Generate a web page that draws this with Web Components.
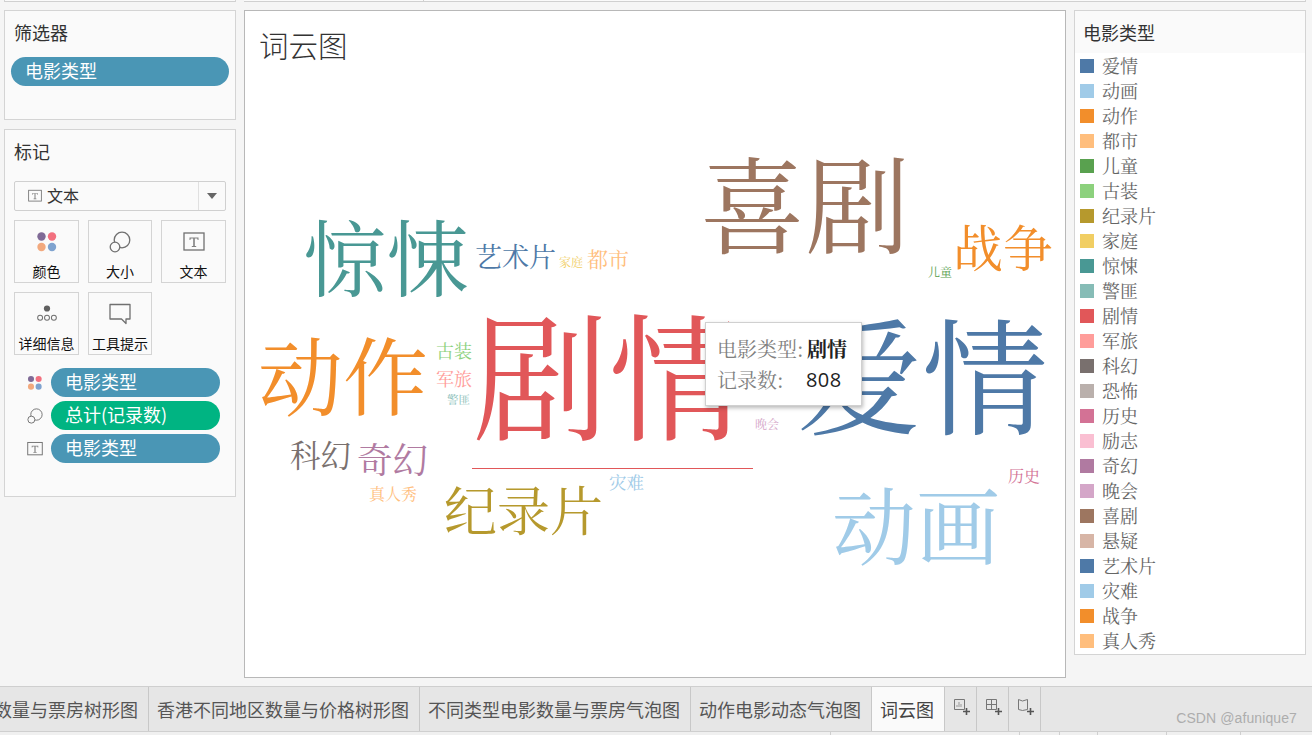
<!DOCTYPE html>
<html lang="zh"><head><meta charset="utf-8"><title>词云图</title>
<style>
html,body{margin:0;padding:0;width:1312px;height:735px;overflow:hidden;background:#f5f5f5;font-family:"Noto Sans CJK SC",sans-serif}
</style></head><body>
<app-shell></app-shell>
<script>
const SERIF='"Noto Serif CJK SC","Source Han Serif SC","Liberation Serif","Noto Sans CJK SC",serif';
const SANS='"Noto Sans CJK SC",sans-serif';
const ICONS={
 color:s=>`<svg width="${s}" height="${s}" viewBox="0 0 22 22"><circle cx="5.5" cy="5.5" r="4.2" fill="#7f6a96"/><circle cx="16" cy="5.5" r="4.2" fill="#f2707f"/><circle cx="5.5" cy="16" r="4.2" fill="#f2a97e"/><circle cx="16" cy="16" r="4.2" fill="#7fa3cf"/></svg>`,
 size:s=>`<svg width="${s}" height="${s}" viewBox="0 0 22 22" fill="none" stroke="#707070" stroke-width="1.3"><circle cx="13" cy="9" r="7.8"/><circle cx="6" cy="16" r="4.8" fill="#fafafa"/></svg>`,
 text:s=>`<svg width="${s}" height="${s}" viewBox="0 0 22 22"><rect x="1" y="2" width="20" height="17" fill="none" stroke="#707070" stroke-width="1.3"/><path d="M6.5 6.5h9v2.5h-.8l-.5-1.5h-2.4v7.5h1.4v1H8.800v-1h1.400V7.500H7.800L7.300 9H6.500z" fill="#808080"/></svg>`,
 detail:s=>`<svg width="${s}" height="${s}" viewBox="0 0 24 22"><circle cx="12" cy="5" r="3.4" fill="#606060"/><g fill="none" stroke="#707070" stroke-width="1.1"><circle cx="4.500" cy="15" r="2.700"/><circle cx="12" cy="15" r="2.700"/><circle cx="19.500" cy="15" r="2.700"/></g></svg>`,
 tip:s=>`<svg width="${s}" height="${s}" viewBox="0 0 22 22" fill="none" stroke="#707070" stroke-width="1.3"><path d="M1 1.500h20v14.500h-4v4.500l-4.500-4.500H1z" stroke-linejoin="round"/></svg>`
};
function def(name,css,html,init){customElements.define(name,class extends HTMLElement{connectedCallback(){if(this.shadowRoot)return;const r=this.attachShadow({mode:'open'});r.innerHTML=`<style>${css}</style>`+(typeof html==='function'?html(this):html);if(init)init(this,r)}})}

def('x-panel',`:host{display:block;box-sizing:border-box;background:#fafafa;border:1px solid #d4d4d4;padding:8px 9px 0}
h2{margin:0;font:400 18px/26px ${SANS};color:#333}`,e=>`<h2>${e.getAttribute('title-text')}</h2><slot></slot>`);

def('x-pill',`:host{display:flex;align-items:center;box-sizing:border-box;height:29px;border-radius:15px;background:var(--c,#4a96b5);color:#fff;font:400 18px/29px ${SANS};padding-left:15px;white-space:nowrap}
span{position:relative;left:-1px;top:-1px}`,`<span><slot></slot></span>`);

def('x-dropdown',`:host{display:flex;align-items:center;box-sizing:border-box;height:30px;margin-top:17px;border:1px solid #d0d0d0;border-radius:2px;background:#fafafa;font:400 16px/26px ${SANS};color:#333}
.a{display:flex;align-items:center;gap:5px;flex:1;padding-left:13px}
.b{width:26px;height:100%;border-left:1px solid #e0e0e0;display:flex;align-items:center;justify-content:center}
i{width:0;height:0;border-left:5px solid transparent;border-right:5px solid transparent;border-top:6px solid #666;margin-bottom:1px}`,
e=>`<div class="a">${ICONS.text(14)}<span style="margin-top:-3px"><slot></slot></span></div><div class="b"><i></i></div>`);

def('x-card',`:host{display:flex;flex-direction:column;align-items:center;box-sizing:border-box;height:63px;border:1px solid #d4d4d4;background:#fafafa}
.i{height:36px;display:flex;align-items:center;justify-content:center;margin-top:3px}
.l{font:400 14px/20px ${SANS};color:#111;white-space:nowrap;margin-top:1px}`,
e=>`<div class="i">${ICONS[e.getAttribute('icon')](22)}</div><div class="l"><slot></slot></div>`);

def('x-shelf-row',`:host{display:flex;align-items:center;gap:9px;padding-left:14px}.i{width:14px;height:14px;display:flex;align-items:center;justify-content:center}.i svg{flex:none}::slotted(*){flex:1}`,
e=>`<div class="i">${ICONS[e.getAttribute('icon')](16)}</div><slot></slot>`);

def('x-tooltip',`:host{position:absolute;left:460px;top:311px;box-sizing:border-box;width:157px;height:84px;background:#fff;border:1px solid #d0d0d0;box-shadow:1px 2px 4px rgba(0,0,0,.28);padding:10px 0 0 11px;display:grid;grid-template-columns:90px auto;grid-auto-rows:31px;align-items:center}
.k{font:400 20px/31px ${SERIF};color:#808080;white-space:nowrap}
.v{font:700 20px/31px ${SERIF};color:#222;white-space:nowrap}
.n{font:400 20px/31px "Open Sans","Lato",sans-serif;color:#222;letter-spacing:.4px;margin-left:-1px}`,
`<span class="k">电影类型:</span><span class="v">剧情</span><span class="k">记录数:</span><span class="n">808</span>`);

def('x-word',`:host{position:absolute;white-space:nowrap;line-height:1;font-family:${SERIF}}`,`<slot></slot>`,
e=>{const s=e.style,a=k=>e.getAttribute(k);s.left=(a('x')-245)+'px';s.top=(a('y')-11)+'px';s.fontSize=a('s')+'px';s.color=a('c')});

const WORDS=[['剧情',472,302,137,'#e15759'],['爱情',796,308,126,'#4e79a7'],['喜剧',700,147,105,'#9d7660'],['动画',832,480,84,'#a0cbe8'],['惊悚',303,213,83,'#499894'],['动作',258,330,85,'#f28e2b'],['战争',953,220,50,'#f28e2b'],['纪录片',444,482,53,'#b6992d'],['艺术片',475,242,27,'#4e79a7'],['科幻',290,439,30.500,'#79706e'],['奇幻',357,440,35.500,'#b07aa1'],['都市',587,248,21,'#ffbe7d'],['家庭',559,256,12,'#f1ce63'],['儿童',928,266,12,'#59a14f'],['古装',436,341,18,'#8cd17d'],['军旅',436,369,18,'#ff9d9a'],['警匪',447,394,11.500,'#86bcb6'],['晚会',755,418,12,'#d4a6c8'],['灾难',609,473,17.500,'#a0cbe8'],['历史',1008,468,16,'#d37295'],['真人秀',369,486,16,'#ffbe7d']];
def('x-canvas',`:host{display:block;position:relative;box-sizing:border-box;width:822px;height:668px;background:#fff;border:1px solid #b8b8b8;overflow:hidden}
h1{margin:0;padding:13px 0 0 14px;font:300 29.5px/40px ${SANS};color:#333}
.rule{position:absolute;left:227px;top:457px;width:281px;height:1px;background:#e15759}`,
`<h1>词云图</h1>`+WORDS.map(w=>`<x-word x="${w[1]}" y="${w[2]}" s="${w[3]}" c="${w[4]}">${w[0]}</x-word>`).join('')+`<div class="rule"></div><x-tooltip></x-tooltip>`);

const LEG=[['爱情','#4e79a7'],['动画','#a0cbe8'],['动作','#f28e2b'],['都市','#ffbe7d'],['儿童','#59a14f'],['古装','#8cd17d'],['纪录片','#b6992d'],['家庭','#f1ce63'],['惊悚','#499894'],['警匪','#86bcb6'],['剧情','#e15759'],['军旅','#ff9d9a'],['科幻','#79706e'],['恐怖','#bab0ac'],['历史','#d37295'],['励志','#fabfd2'],['奇幻','#b07aa1'],['晚会','#d4a6c8'],['喜剧','#9d7660'],['悬疑','#d7b5a6'],['艺术片','#4e79a7'],['灾难','#a0cbe8'],['战争','#f28e2b'],['真人秀','#ffbe7d']];
def('x-legend-item',`:host{display:flex;align-items:center;height:25px;padding-left:5px;gap:8px;font:400 18px/25px ${SERIF};color:#666}
i{width:14px;height:14px;background:var(--s)}`,`<i></i><span><slot></slot></span>`);
def('x-legend',`:host{display:block;box-sizing:border-box;height:645px;background:#fff;border:1px solid #d4d4d4}
h3{margin:0;height:42px;padding-left:8px;background:#fafafa;font:400 18px/42px ${SANS};color:#333}`,
`<h3>电影类型</h3>`+LEG.map(l=>`<x-legend-item style="--s:${l[1]}">${l[0]}</x-legend-item>`).join(''));

const PLUS=`<path d="M9 12.500h7M12.500 9v7" stroke="#555" stroke-width="1.6" fill="none"/>`;
const ADD={a:`<svg width="16" height="17" viewBox="0 0 16 17" fill="none" stroke="#777"><path d="M.5.500h10v10H.5z"/><path d="M3 8V6M5 8V3M7 8V5" stroke="#999"/>${PLUS}</svg>`,
b:`<svg width="16" height="17" viewBox="0 0 16 17" fill="none" stroke="#777"><path d="M.5.500h10v10H.5zM.5 5.500h10M5.500.500v10"/>${PLUS}</svg>`,
c:`<svg width="16" height="17" viewBox="0 0 16 17" fill="none" stroke="#777"><path d="M.5.500l4 1.500 5-1.500v10l-5 1-4-1z"/>${PLUS}</svg>`};
def('x-tab',`:host{display:flex;align-items:center;box-sizing:border-box;height:100%;padding:0 10px 0 8px;border-right:1px solid #c8c8c8;font:400 18px/44px ${SANS};color:#555;white-space:nowrap;overflow:hidden;flex:none}
:host([active]){background:#fafafa;color:#444}
:host([clip]){width:149px;justify-content:flex-end;padding:0}
:host([clip]) span{padding-right:10px}
:host([add]){width:32px;padding:0 0 4px 9px}
svg{display:block}`,e=>e.hasAttribute('add')?ADD[e.getAttribute('add')]:`<span><slot></slot></span>`);
def('x-tabbar',`:host{display:flex;position:relative;box-sizing:border-box;height:46px;border-top:1px solid #cfcfcf;border-bottom:1px solid #cfcfcf;background:#e6e6e6}
.w{position:absolute;right:15px;top:22px;font:400 14px/18px "Liberation Sans",sans-serif;color:#adadad;letter-spacing:.1px}`,
`<slot></slot><span class="w">CSDN @afunique7</span>`);
def('x-statusbar',`:host{display:flex;flex:1;background:#f0f0f0}
i{box-sizing:border-box;height:100%;border-right:1px solid #cfcfcf}`,
[831,189,40,38,69,74].map(w=>`<i style="width:${w}px;flex:none"></i>`).join(''));

def('app-shell',`:host{display:flex;flex-direction:column;width:1312px;height:735px}
.top{height:2px;display:flex;gap:8px;box-sizing:border-box;padding-left:4px;flex:none}
.top i{display:block;box-sizing:border-box;height:2px;border-bottom:1px solid #d0d0d0;background:#fafafa}
.top i.l{width:232px;border-left:1px solid #d4d4d4;border-right:1px solid #d4d4d4}
.top i.c{width:180px;border-right:1px solid #d0d0d0;margin-right:-8px}
.top i.r{width:882px;border-right:1px solid #d4d4d4}
.main{flex:none;height:684px;box-sizing:border-box;padding:8px 6px 0 4px;display:flex;gap:8px;align-items:flex-start}
.left{width:232px;flex:none;display:flex;flex-direction:column;gap:9px}
.right{width:232px;flex:none}
.filter{height:110px}
.filter x-pill{margin:12px 0 0 -3px;width:218px}
.marks{height:368px}
.grid{display:grid;grid-template-columns:65px 64px 65px;gap:9px;margin-top:9px}
.shelf{display:flex;flex-direction:column;gap:4px;margin-top:13px;padding-right:6px}`,
`<div class="top"><i class="l"></i><i class="c"></i><i class="r"></i></div>
<div class="main">
 <div class="left">
  <x-panel class="filter" title-text="筛选器"><x-pill>电影类型</x-pill></x-panel>
  <x-panel class="marks" title-text="标记">
   <x-dropdown>文本</x-dropdown>
   <div class="grid">
    <x-card icon="color">颜色</x-card><x-card icon="size">大小</x-card><x-card icon="text">文本</x-card>
    <x-card icon="detail">详细信息</x-card><x-card icon="tip">工具提示</x-card>
   </div>
   <div class="shelf">
    <x-shelf-row icon="color"><x-pill>电影类型</x-pill></x-shelf-row>
    <x-shelf-row icon="size"><x-pill style="--c:#00b482">总计(记录数)</x-pill></x-shelf-row>
    <x-shelf-row icon="text"><x-pill>电影类型</x-pill></x-shelf-row>
   </div>
  </x-panel>
 </div>
 <x-canvas></x-canvas>
 <div class="right"><x-legend></x-legend></div>
</div>
<x-tabbar>
 <x-tab clip>电影数量与票房树形图</x-tab><x-tab>香港不同地区数量与价格树形图</x-tab><x-tab>不同类型电影数量与票房气泡图</x-tab><x-tab>动作电影动态气泡图</x-tab><x-tab active>词云图</x-tab>
 <x-tab add="a"></x-tab><x-tab add="b"></x-tab><x-tab add="c"></x-tab>
</x-tabbar>
<x-statusbar></x-statusbar>`);
</script>
</body></html>
